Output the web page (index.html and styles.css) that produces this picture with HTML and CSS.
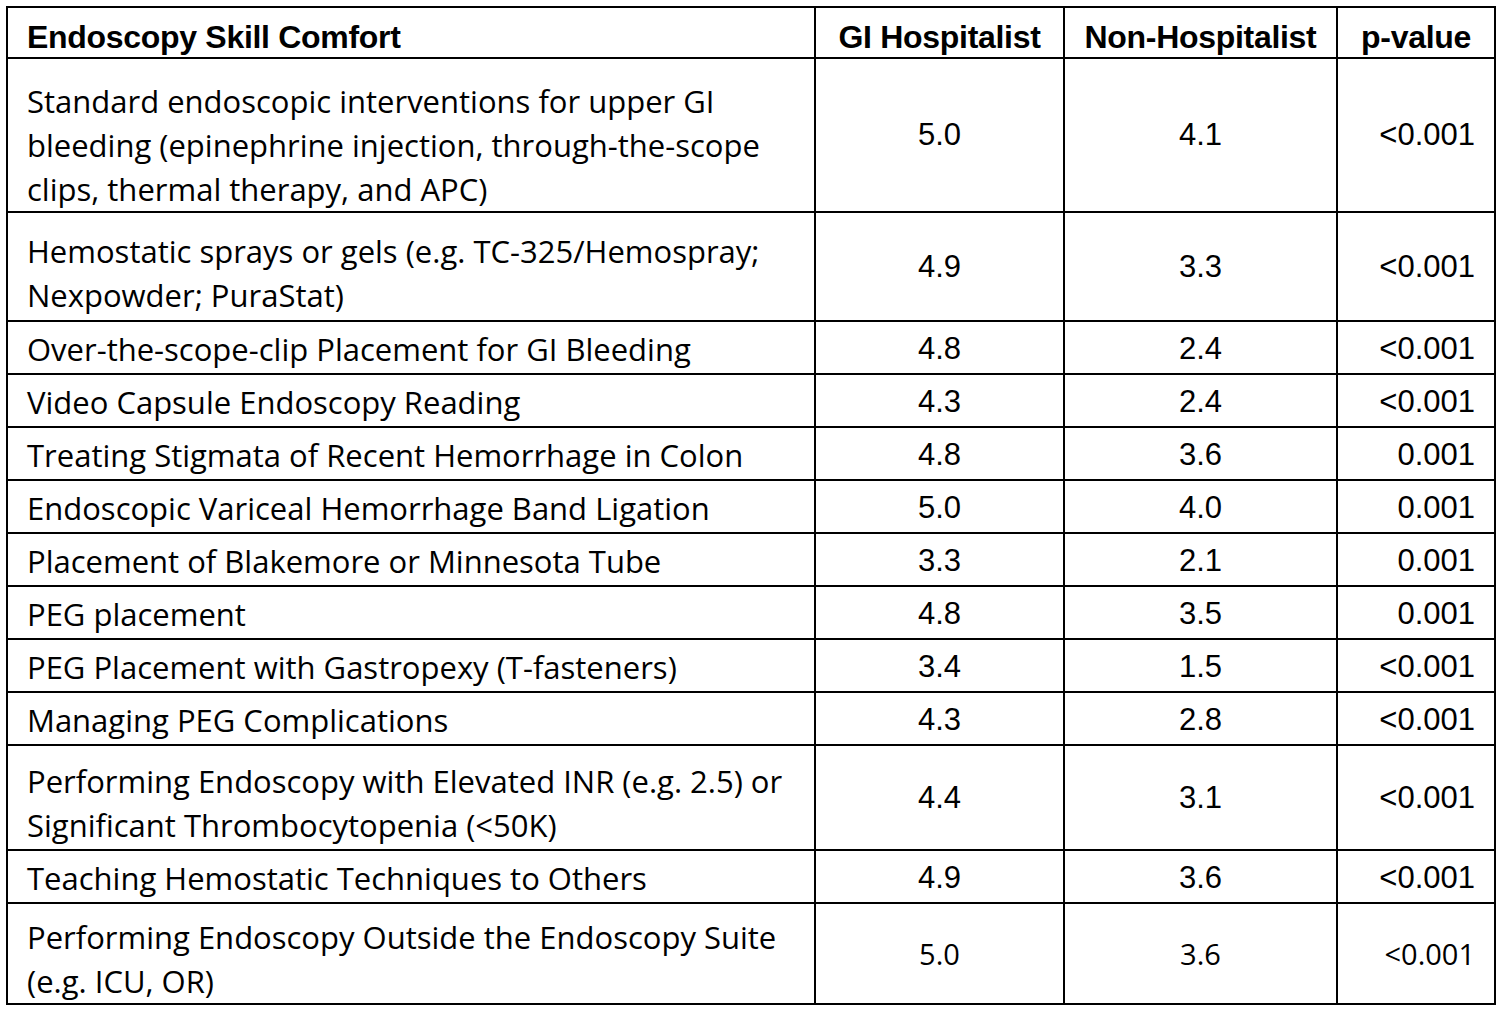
FILE: index.html
```html
<!DOCTYPE html>
<html lang="en">
<head>
<meta charset="utf-8">
<title>Endoscopy Skill Comfort</title>
<link rel="stylesheet" href="styles.css">
</head>
<body>
<table class="skills">
  <colgroup>
    <col class="c-skill">
    <col class="c-gi">
    <col class="c-non">
    <col class="c-p">
  </colgroup>
  <thead>
    <tr>
      <th class="h-skill">Endoscopy Skill Comfort</th>
      <th class="h-num">GI Hospitalist</th>
      <th class="h-num">Non-Hospitalist</th>
      <th class="h-num">p-value</th>
    </tr>
  </thead>
  <tbody>
    <tr class="r3">
      <td class="skill">Standard endoscopic interventions for upper GI bleeding (epinephrine injection, through-the-scope clips, thermal therapy, and APC)</td>
      <td class="num">5.0</td><td class="num">4.1</td><td class="pv">&lt;0.001</td>
    </tr>
    <tr class="r2a">
      <td class="skill">Hemostatic sprays or gels (e.g. TC-325/Hemospray; Nexpowder; PuraStat)</td>
      <td class="num">4.9</td><td class="num">3.3</td><td class="pv">&lt;0.001</td>
    </tr>
    <tr>
      <td class="skill">Over-the-scope-clip Placement for GI Bleeding</td>
      <td class="num">4.8</td><td class="num">2.4</td><td class="pv">&lt;0.001</td>
    </tr>
    <tr>
      <td class="skill">Video Capsule Endoscopy Reading</td>
      <td class="num">4.3</td><td class="num">2.4</td><td class="pv">&lt;0.001</td>
    </tr>
    <tr>
      <td class="skill">Treating Stigmata of Recent Hemorrhage in Colon</td>
      <td class="num">4.8</td><td class="num">3.6</td><td class="pv">0.001</td>
    </tr>
    <tr>
      <td class="skill">Endoscopic Variceal Hemorrhage Band Ligation</td>
      <td class="num">5.0</td><td class="num">4.0</td><td class="pv">0.001</td>
    </tr>
    <tr>
      <td class="skill">Placement of Blakemore or Minnesota Tube</td>
      <td class="num">3.3</td><td class="num">2.1</td><td class="pv">0.001</td>
    </tr>
    <tr>
      <td class="skill">PEG placement</td>
      <td class="num">4.8</td><td class="num">3.5</td><td class="pv">0.001</td>
    </tr>
    <tr>
      <td class="skill">PEG Placement with Gastropexy (T-fasteners)</td>
      <td class="num">3.4</td><td class="num">1.5</td><td class="pv">&lt;0.001</td>
    </tr>
    <tr>
      <td class="skill">Managing PEG Complications</td>
      <td class="num">4.3</td><td class="num">2.8</td><td class="pv">&lt;0.001</td>
    </tr>
    <tr class="r2b">
      <td class="skill">Performing Endoscopy with Elevated INR (e.g. 2.5) or Significant Thrombocytopenia (&lt;50K)</td>
      <td class="num">4.4</td><td class="num">3.1</td><td class="pv">&lt;0.001</td>
    </tr>
    <tr>
      <td class="skill">Teaching Hemostatic Techniques to Others</td>
      <td class="num">4.9</td><td class="num">3.6</td><td class="pv">&lt;0.001</td>
    </tr>
    <tr class="r2c">
      <td class="skill">Performing Endoscopy Outside the Endoscopy Suite (e.g. ICU, OR)</td>
      <td class="num alt">5.0</td><td class="num alt">3.6</td><td class="pv alt">&lt;0.001</td>
    </tr>
  </tbody>
</table>
</body>
</html>
```
FILE: styles.css
```css
html, body {
  margin: 0;
  padding: 0;
  background: #ffffff;
}
body {
  padding: 6px 0 0 6px;
  color: #000;
}
.skills {
  border-collapse: collapse;
  table-layout: fixed;
  width: 1488px;
  border: 2px solid #000;
}
.c-skill { width: 808px; }
.c-gi { width: 249px; }
.c-non { width: 273px; }
.c-p { width: 158px; }

.skills th, .skills td {
  border: 2px solid #000;
  vertical-align: middle;
}
.skills th {
  font-family: "Liberation Sans Narrow", "Liberation Sans", Arial, sans-serif;
  font-weight: bold;
  font-size: 32px;
  line-height: 40px;
  letter-spacing: -0.3px;
  padding: 9px 8px 0 8px;
  text-align: center;
}
.skills th.h-skill {
  text-align: left;
  padding-left: 19px;
}
.skills td {
  line-height: 44px;
  padding: 5px 19px 2px 19px;
}
.skills tr.r3 td { padding-top: 10px; padding-bottom: 10px; }
.skills tr.r3 td.skill { padding-top: 20px; padding-bottom: 0; }
.skills tr.r2a td { padding-top: 10px; padding-bottom: 9px; }
.skills tr.r2a td.skill { padding-top: 16px; padding-bottom: 3px; }
.skills tr.r2b td { padding-top: 8px; padding-bottom: 7px; }
.skills tr.r2b td.skill { padding-top: 13px; padding-bottom: 2px; }
.skills tr.r2c td { padding-top: 6px; padding-bottom: 5px; }
.skills tr.r2c td.skill { padding-top: 11px; padding-bottom: 0; }

.skill {
  font-family: "Open Sans", "Noto Sans", sans-serif;
  font-size: 31px;
  text-align: left;
}
.num, .pv {
  font-family: "Liberation Sans", Arial, sans-serif;
  font-size: 31px;
}
.num { text-align: center; }
.pv { text-align: right; }
.alt {
  font-family: "Open Sans", "Noto Sans", sans-serif;
  font-size: 29px;
}
```
